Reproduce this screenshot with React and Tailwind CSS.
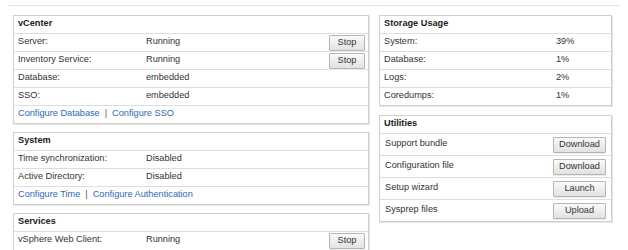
import React from "react";

const FONT = "font-['Liberation_Sans',Arial,sans-serif]";

const Btn = ({ children, w = "w-[36px]" }) => (
  <button
    className={`${w} h-[16px] text-[9.2px] leading-none text-[#333] border border-[#b5b5b5] rounded-[1px] bg-gradient-to-b from-[#fafafa] to-[#e2e2e2] shadow-[0_1px_0_#ececec]`}
  >
    {children}
  </button>
);

const Panel = ({ title, children }) => (
  <div className="border border-[#cfcfcf] shadow-[1px_1px_0_#e6e6e6] bg-white">
    <div className="h-[17px] px-[4px] pb-[1px] flex items-center font-bold text-[9.2px] text-[#222]">{title}</div>
    {children}
  </div>
);

const Row = ({ label, value, action, valueX = "w-[128px]" }) => (
  <div className="h-[18px] border-t border-[#dedede] flex items-center pl-[4px] pr-[3px] text-[9.2px] text-[#333]">
    <div className={`${valueX} shrink-0 pb-[2px]`}>{label}</div>
    <div className="flex-1 pb-[2px]">{value}</div>
    {action}
  </div>
);

const Links = ({ a, b }) => (
  <div className="h-[18px] border-t border-[#dedede] flex items-center px-[4px] pb-[2px] text-[9.2px] text-[#2d69b0] gap-[5px]">
    <span>{a}</span>
    <span className="text-[#555]">|</span>
    <span>{b}</span>
  </div>
);

const UtilRow = ({ label, action }) => (
  <div className="h-[22px] border-t border-[#dedede] flex items-center pl-[5px] pr-[5px] text-[9.2px] text-[#333]">
    <div className="flex-1 pb-[2px]">{label}</div>
    <Btn w="w-[53px]">{action}</Btn>
  </div>
);

export default function App() {
  return (
    <div className={`${FONT} w-[628px] h-[250px] bg-white overflow-hidden`}>
      <div className="mx-[8px] mt-[5px] border-t border-[#e3e3e3]" />
      <div className="flex gap-[10px] pl-[13px] pt-[9px]">
        {/* left column */}
        <div className="w-[356px] flex flex-col gap-[8px]">
          <Panel title="vCenter">
            <Row label="Server:" value="Running" action={<Btn>Stop</Btn>} />
            <Row label="Inventory Service:" value="Running" action={<Btn>Stop</Btn>} />
            <Row label="Database:" value="embedded" />
            <Row label="SSO:" value="embedded" />
            <Links a="Configure Database" b="Configure SSO" />
          </Panel>
          <Panel title="System">
            <Row label="Time synchronization:" value="Disabled" />
            <Row label="Active Directory:" value="Disabled" />
            <Links a="Configure Time" b="Configure Authentication" />
          </Panel>
          <Panel title="Services">
            <Row label="vSphere Web Client:" value="Running" action={<Btn>Stop</Btn>} />
            <div className="h-[18px]" />
          </Panel>
        </div>
        {/* right column */}
        <div className="w-[233px] flex flex-col gap-[9px]">
          <Panel title="Storage Usage">
            <Row label="System:" value="39%" valueX="w-[172px]" />
            <Row label="Database:" value="1%" valueX="w-[172px]" />
            <Row label="Logs:" value="2%" valueX="w-[172px]" />
            <Row label="Coredumps:" value="1%" valueX="w-[172px]" />
          </Panel>
          <Panel title="Utilities">
            <UtilRow label="Support bundle" action="Download" />
            <UtilRow label="Configuration file" action="Download" />
            <UtilRow label="Setup wizard" action="Launch" />
            <UtilRow label="Sysprep files" action="Upload" />
          </Panel>
        </div>
      </div>
    </div>
  );
}
